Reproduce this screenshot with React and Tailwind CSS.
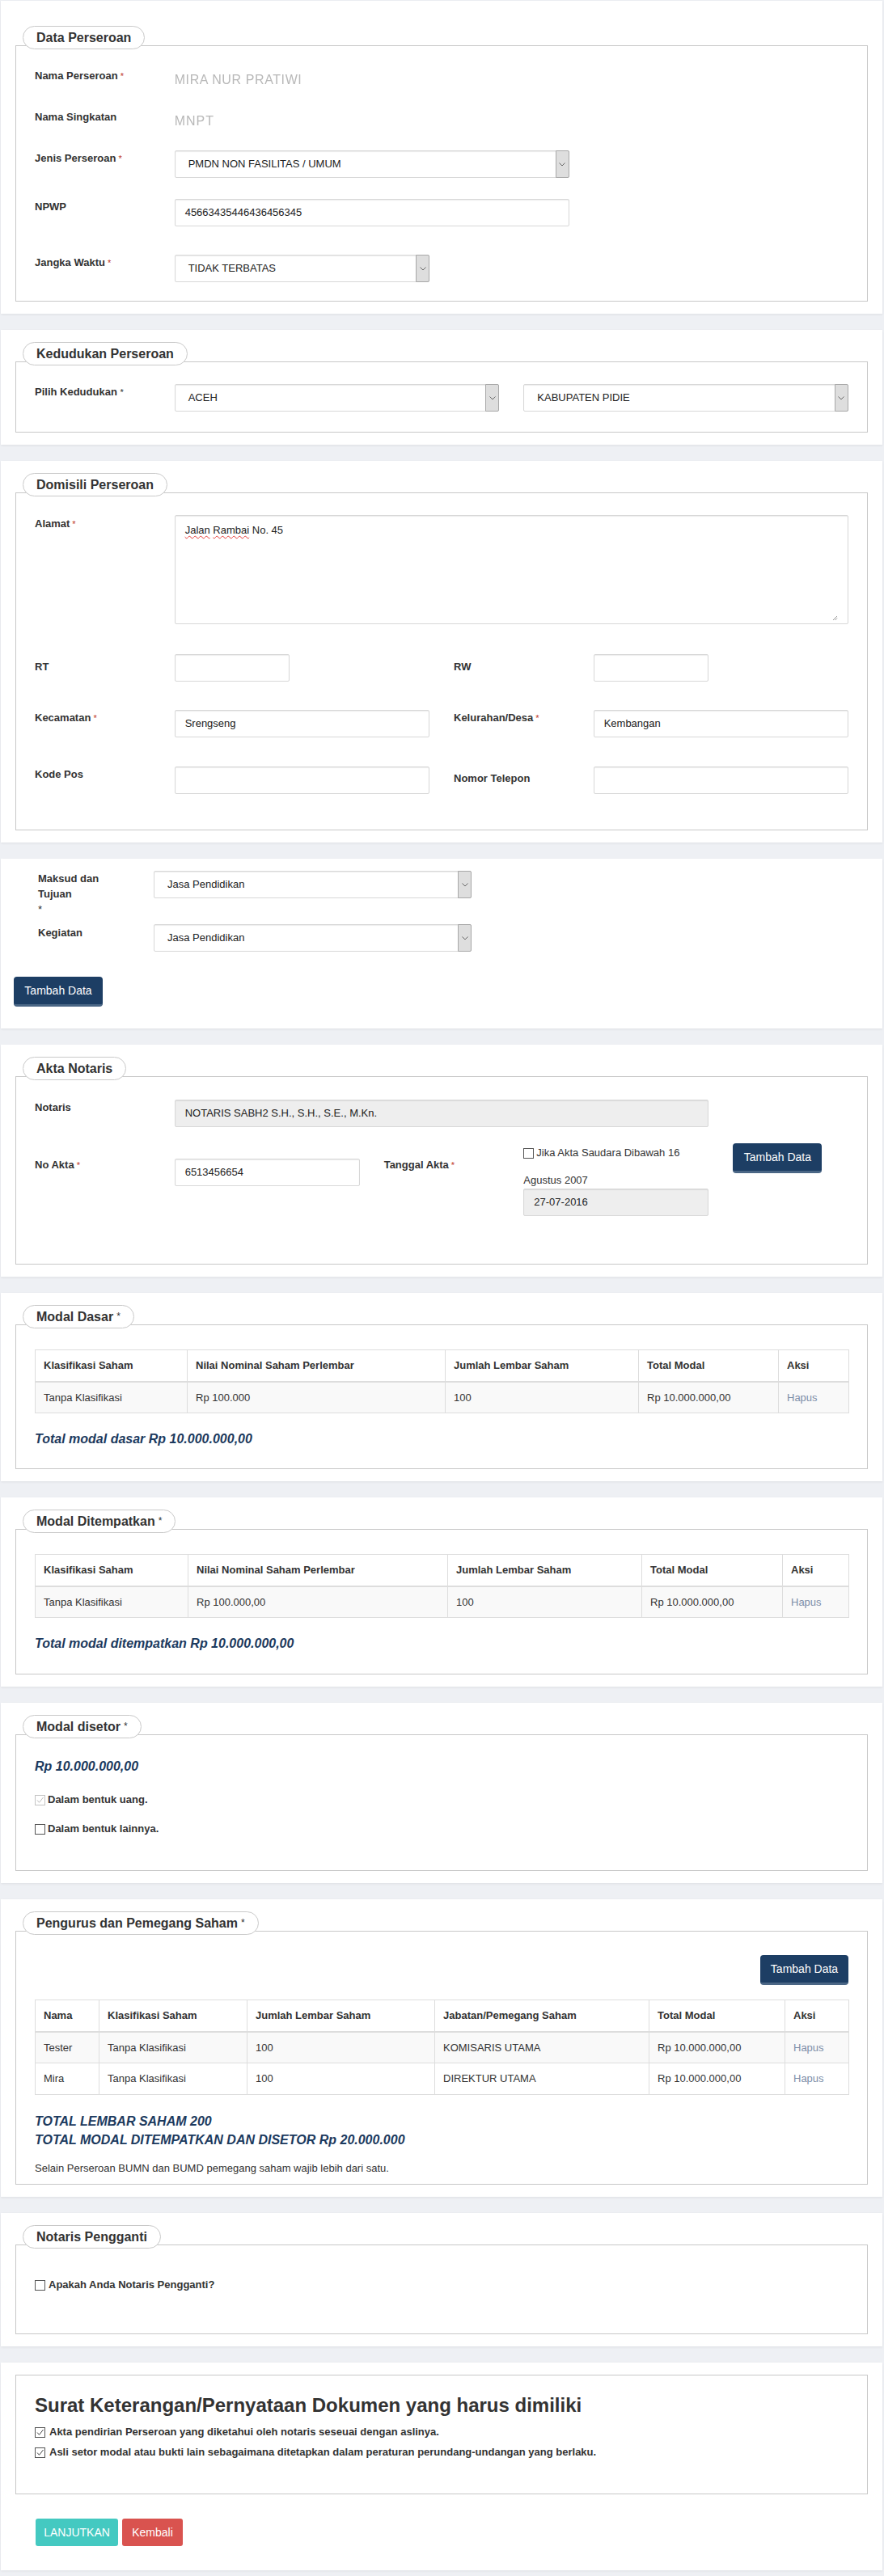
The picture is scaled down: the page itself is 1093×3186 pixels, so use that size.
import React from 'react';

const Req = () => <span className="ml-[3px] align-top text-[11px] font-normal text-[#c0392b]">*</span>;

function Card({ children, className = '' }) {
  return (
    <div className={`bg-white px-[18px] shadow-[0_1px_3px_rgba(0,0,0,0.07)] ${className}`}>{children}</div>
  );
}

function Fieldset({ legend, star, children, className = '' }) {
  return (
    <div>
      {legend && (
        <div className="flex">
          <div className="relative z-10 ml-[9px] flex h-[29px] items-center rounded-[15px] border border-[#c9c9c9] bg-white px-[16px] text-[16px] font-bold text-[#333]">
            {legend}
            {star && <span className="ml-[4px] self-start pt-[4px] text-[12px] font-normal">*</span>}
          </div>
        </div>
      )}
      <div className={`border border-[#c8c8c8] px-[23px] ${legend ? '-mt-[5px]' : ''} ${className}`}>{children}</div>
    </div>
  );
}

function Label({ children, req, className = '' }) {
  return (
    <div className={`col-span-2 text-[13px] font-bold leading-5 text-[#333] ${className}`}>
      {children}
      {req && <Req />}
    </div>
  );
}

function Select({ value, className = '' }) {
  return (
    <div className={`flex h-[34px] items-stretch rounded-[2px] border border-[#d8d8d8] bg-white shadow-[inset_0_1px_1px_rgba(0,0,0,0.08)] ${className}`}>
      <div className="flex flex-1 items-center pl-[16px] text-[13px] text-[#222]">{value}</div>
      <div className="-my-px -mr-px flex w-[17px] items-center justify-center rounded-r-[2px] border border-[#a8a8a8] bg-[#dedede]">
        <svg width="8" height="5" viewBox="0 0 8 5">
          <path d="M0.5 0.5l3.5 3.5 3.5-3.5" fill="none" stroke="#666" strokeWidth="1" />
        </svg>
      </div>
    </div>
  );
}

function Input({ value = '', disabled, className = '' }) {
  return (
    <div
      className={`flex h-[34px] items-center rounded-[2px] border border-[#d8d8d8] px-[12px] text-[13px] text-[#222] shadow-[inset_0_1px_1px_rgba(0,0,0,0.08)] ${
        disabled ? 'bg-[#eeeeee]' : 'bg-white'
      } ${className}`}
    >
      {value}
    </div>
  );
}

function Check({ checked, muted }) {
  return (
    <span
      className={`inline-flex h-[13px] w-[13px] shrink-0 items-center justify-center border bg-white ${
        muted ? 'border-[#c4c4c4]' : 'border-[#555]'
      }`}
    >
      {checked && (
        <svg width="11" height="11" viewBox="0 0 11 11">
          <path d="M2 5.5l2.5 2.8L9.5 2" fill="none" stroke={muted ? '#bdbdbd' : '#444'} strokeWidth="1" />
        </svg>
      )}
    </span>
  );
}

function Button({ children, className = '' }) {
  return (
    <div
      className={`flex h-[37px] items-center justify-center rounded-[4px] border-b-[3px] border-[#4a6685] bg-[#1d3e64] text-[14px] text-white ${className}`}
    >
      {children}
    </div>
  );
}

function Table({ cols, rows }) {
  return (
    <table className="w-full table-fixed border-collapse text-[13px] text-[#333]">
      <colgroup>
        {cols.map((c) => (
          <col key={c.label} style={{ width: c.w }} />
        ))}
      </colgroup>
      <thead>
        <tr className="h-[39px]">
          {cols.map((c) => (
            <th key={c.label} className="border border-b-2 border-[#dddddd] px-[10px] text-left font-bold">
              {c.label}
            </th>
          ))}
        </tr>
      </thead>
      <tbody>
        {rows.map((r, i) => (
          <tr key={i} className={`h-[39px] ${i % 2 === 0 ? 'bg-[#f9f9f9]' : 'bg-white'}`}>
            {r.map((cell, j) => (
              <td
                key={j}
                className={`border border-[#dddddd] px-[10px] ${j === r.length - 1 ? 'text-[#7d8ea8]' : ''}`}
              >
                {cell}
              </td>
            ))}
          </tr>
        ))}
      </tbody>
    </table>
  );
}

const modalCols = (w) =>
  ['Klasifikasi Saham', 'Nilai Nominal Saham Perlembar', 'Jumlah Lembar Saham', 'Total Modal', 'Aksi'].map(
    (label, i) => ({ label, w: w[i] })
  );

export default function App() {
  return (
    <div className="min-h-[3186px] bg-[#eef0f4] pl-[1px] pr-[2px] pt-[1px] font-['Liberation_Sans',Arial,sans-serif] text-[#333]">
      <div className="flex flex-col gap-[20px]">
        {/* Data Perseroan */}
        <Card className="pt-[31px] pb-[15px]">
          <Fieldset legend="Data Perseroan" className="pt-[27px] pb-[23px]">
            <div className="mb-[17px] grid h-[34px] grid-cols-12 gap-x-[30px]">
              <Label req>Nama Perseroan</Label>
              <div className="col-span-10 pt-[3px] text-[16px] tracking-[0.6px] text-[#b8b8b8] blur-[0.4px]">MIRA NUR PRATIWI</div>
            </div>
            <div className="mb-[17px] grid h-[34px] grid-cols-12 gap-x-[30px]">
              <Label>Nama Singkatan</Label>
              <div className="col-span-10 pt-[3px] text-[16px] tracking-[1px] text-[#b8b8b8] blur-[0.4px]">MNPT</div>
            </div>
            <div className="mb-[26px] grid grid-cols-12 gap-x-[30px]">
              <Label req>Jenis Perseroan</Label>
              <Select className="col-span-6" value="PMDN NON FASILITAS / UMUM" />
            </div>
            <div className="mb-[35px] grid grid-cols-12 gap-x-[30px]">
              <Label>NPWP</Label>
              <Input className="col-span-6" value="45663435446436456345" />
            </div>
            <div className="grid grid-cols-12 gap-x-[30px]">
              <Label req>Jangka Waktu</Label>
              <Select className="col-span-4" value="TIDAK TERBATAS" />
            </div>
          </Fieldset>
        </Card>

        {/* Kedudukan Perseroan */}
        <Card className="pt-[15px] pb-[15px]">
          <Fieldset legend="Kedudukan Perseroan" className="pt-[27px] pb-[25px]">
            <div className="grid grid-cols-12 gap-x-[30px]">
              <Label>
                Pilih Kedudukan <span className="align-top text-[11px] font-normal">*</span>
              </Label>
              <Select className="col-span-5" value="ACEH" />
              <Select className="col-span-5" value="KABUPATEN PIDIE" />
            </div>
          </Fieldset>
        </Card>

        {/* Domisili Perseroan */}
        <Card className="pt-[15px] pb-[15px]">
          <Fieldset legend="Domisili Perseroan" className="pt-[27px] pb-[44px]">
            <div className="mb-[37px] grid grid-cols-12 gap-x-[30px]">
              <Label req className="pt-[1px]">Alamat</Label>
              <div className="col-span-10 flex h-[135px] flex-col rounded-[2px] border border-[#d8d8d8] px-[12px] pt-[8px] pb-[3px] text-[13px] text-[#222] shadow-[inset_0_1px_1px_rgba(0,0,0,0.08)]">
                <div className="flex-1">
                  <span className="underline decoration-[#e53935] decoration-wavy decoration-1 underline-offset-2">Jalan</span>{' '}
                  <span className="underline decoration-[#e53935] decoration-wavy decoration-1 underline-offset-2">Rambai</span> No. 45
                </div>
                <svg className="self-end" width="7" height="7" viewBox="0 0 7 7">
                  <path d="M6 1L1 6M6 3.5L3.5 6" stroke="#999" strokeWidth="1" />
                </svg>
              </div>
            </div>
            <div className="mb-[35px] grid grid-cols-12 gap-x-[30px]">
              <Label className="pt-[6px]">RT</Label>
              <Input className="col-span-2" />
              <div className="col-span-2" />
              <Label className="pt-[6px]">RW</Label>
              <Input className="col-span-2" />
            </div>
            <div className="mb-[36px] grid grid-cols-12 gap-x-[30px]">
              <Label req>Kecamatan</Label>
              <Input className="col-span-4" value="Srengseng" />
              <Label req>Kelurahan/Desa</Label>
              <Input className="col-span-4" value="Kembangan" />
            </div>
            <div className="grid grid-cols-12 gap-x-[30px]">
              <Label>Kode Pos</Label>
              <Input className="col-span-4" />
              <Label className="pt-[5px]">Nomor Telepon</Label>
              <Input className="col-span-4" />
            </div>
          </Fieldset>
        </Card>

        {/* Maksud dan Tujuan */}
        <Card className="pt-[15px] pb-[27px]">
          <div className="flex h-[66px] pl-[28px]">
            <div className="w-[143px] text-[13px] font-bold leading-[19px]">
              Maksud dan
              <br />
              Tujuan
              <br />
              <span className="font-normal">*</span>
            </div>
            <Select className="w-[393px]" value="Jasa Pendidikan" />
          </div>
          <div className="flex pl-[28px]">
            <div className="w-[143px] pt-[1px] text-[13px] font-bold leading-5">Kegiatan</div>
            <Select className="w-[393px]" value="Jasa Pendidikan" />
          </div>
          <Button className="-ml-[2px] mt-[31px] w-[110px]">Tambah Data</Button>
        </Card>

        {/* Akta Notaris */}
        <Card className="pt-[15px] pb-[15px]">
          <Fieldset legend="Akta Notaris" className="pt-[28px] pb-[59px]">
            <div className="mb-[20px] grid grid-cols-12 gap-x-[30px]">
              <Label>Notaris</Label>
              <Input className="col-span-8" disabled value="NOTARIS SABH2 S.H., S.H., S.E., M.Kn." />
            </div>
            <div className="grid grid-cols-12 items-start gap-x-[30px]">
              <Label req className="mt-[17px]">No Akta</Label>
              <Input className="col-span-3 mt-[19px]" value="6513456654" />
              <Label req className="mt-[17px]">Tanggal Akta</Label>
              <div className="col-span-3 mt-[3px]">
                <div className="flex h-[18px] items-center gap-[3px] text-[13px] text-[#333]">
                  <Check />
                  <span>Jika Akta Saudara Dibawah 16</span>
                </div>
                <div className="mt-[16px] text-[13px] leading-[18px]">Agustus 2007</div>
                <Input className="mt-[1px]" disabled value="27-07-2016" />
              </div>
              <div className="col-span-2 flex">
                <Button className="w-[110px]">Tambah Data</Button>
              </div>
            </div>
          </Fieldset>
        </Card>

        {/* Modal Dasar */}
        <Card className="pt-[15px] pb-[15px]">
          <Fieldset legend="Modal Dasar" star className="pt-[30px] pb-[25px]">
            <Table
              cols={modalCols([188, 319, 239, 173, 87])}
              rows={[['Tanpa Klasifikasi', 'Rp 100.000', '100', 'Rp 10.000.000,00', 'Hapus']]}
            />
            <div className="mt-[21px] text-[16px] font-bold italic leading-[22px] text-[#1c3a5e]">
              Total modal dasar Rp 10.000.000,00
            </div>
          </Fieldset>
        </Card>

        {/* Modal Ditempatkan */}
        <Card className="pt-[15px] pb-[15px]">
          <Fieldset legend="Modal Ditempatkan" star className="pt-[30px] pb-[26px]">
            <Table
              cols={modalCols([189, 321, 240, 174, 82])}
              rows={[['Tanpa Klasifikasi', 'Rp 100.000,00', '100', 'Rp 10.000.000,00', 'Hapus']]}
            />
            <div className="mt-[21px] text-[16px] font-bold italic leading-[22px] text-[#1c3a5e]">
              Total modal ditempatkan Rp 10.000.000,00
            </div>
          </Fieldset>
        </Card>

        {/* Modal disetor */}
        <Card className="pt-[15px] pb-[15px]">
          <Fieldset legend="Modal disetor" star className="pt-[28px] pb-[41px]">
            <div className="text-[16px] font-bold italic leading-[22px] text-[#1c3a5e]">Rp 10.000.000,00</div>
            <div className="mt-[20px] flex h-[20px] items-center gap-[3px] text-[13px] font-bold">
              <Check checked muted />
              <span>Dalam bentuk uang.</span>
            </div>
            <div className="mt-[16px] flex h-[20px] items-center gap-[3px] text-[13px] font-bold">
              <Check />
              <span>Dalam bentuk lainnya.</span>
            </div>
          </Fieldset>
        </Card>

        {/* Pengurus dan Pemegang Saham */}
        <Card className="pt-[15px] pb-[15px]">
          <Fieldset legend="Pengurus dan Pemegang Saham" star className="pt-[29px] pb-[10px]">
            <div className="flex justify-end">
              <Button className="w-[109px]">Tambah Data</Button>
            </div>
            <div className="mt-[18px]">
              <Table
                cols={[
                  { label: 'Nama', w: 79 },
                  { label: 'Klasifikasi Saham', w: 183 },
                  { label: 'Jumlah Lembar Saham', w: 232 },
                  { label: 'Jabatan/Pemegang Saham', w: 265 },
                  { label: 'Total Modal', w: 168 },
                  { label: 'Aksi', w: 79 },
                ]}
                rows={[
                  ['Tester', 'Tanpa Klasifikasi', '100', 'KOMISARIS UTAMA', 'Rp 10.000.000,00', 'Hapus'],
                  ['Mira', 'Tanpa Klasifikasi', '100', 'DIREKTUR UTAMA', 'Rp 10.000.000,00', 'Hapus'],
                ]}
              />
            </div>
            <div className="mt-[21px] text-[16px] font-bold italic leading-[23px] text-[#1c3a5e]">
              TOTAL LEMBAR SAHAM 200
              <br />
              TOTAL MODAL DITEMPATKAN DAN DISETOR Rp 20.000.000
            </div>
            <p className="mt-[15px] text-[13px] leading-[18px]">
              Selain Perseroan BUMN dan BUMD pemegang saham wajib lebih dari satu.
            </p>
          </Fieldset>
        </Card>

        {/* Notaris Pengganti */}
        <Card className="pt-[15px] pb-[15px]">
          <Fieldset legend="Notaris Pengganti" className="pt-[39px] pb-[50px]">
            <div className="flex h-[20px] items-center gap-[4px] text-[13px] font-bold">
              <Check />
              <span>Apakah Anda Notaris Pengganti?</span>
            </div>
          </Fieldset>
        </Card>

        {/* Surat Keterangan */}
        <Card className="pt-[15px] pb-[30px]">
          <Fieldset className="pt-[24px] pb-[41px]">
            <h3 className="text-[24px] font-bold leading-[26px] text-[#333]">
              Surat Keterangan/Pernyataan Dokumen yang harus dimiliki
            </h3>
            <div className="mt-[10px] flex h-[20px] items-center gap-[5px] text-[13px] font-bold">
              <Check checked />
              <span>Akta pendirian Perseroan yang diketahui oleh notaris seseuai dengan aslinya.</span>
            </div>
            <div className="mt-[5px] flex h-[20px] items-center gap-[5px] text-[13px] font-bold">
              <Check checked />
              <span>Asli setor modal atau bukti lain sebagaimana ditetapkan dalam peraturan perundang-undangan yang berlaku.</span>
            </div>
          </Fieldset>
          <div className="mt-[30px] flex gap-[5px] pl-[25px]">
            <div className="flex h-[34px] w-[102px] items-center justify-center rounded-[3px] bg-[#44c9c1] text-[14px] text-white">
              LANJUTKAN
            </div>
            <div className="flex h-[34px] w-[75px] items-center justify-center rounded-[3px] bg-[#d9534f] text-[14px] text-white">
              Kembali
            </div>
          </div>
        </Card>
      </div>
    </div>
  );
}
